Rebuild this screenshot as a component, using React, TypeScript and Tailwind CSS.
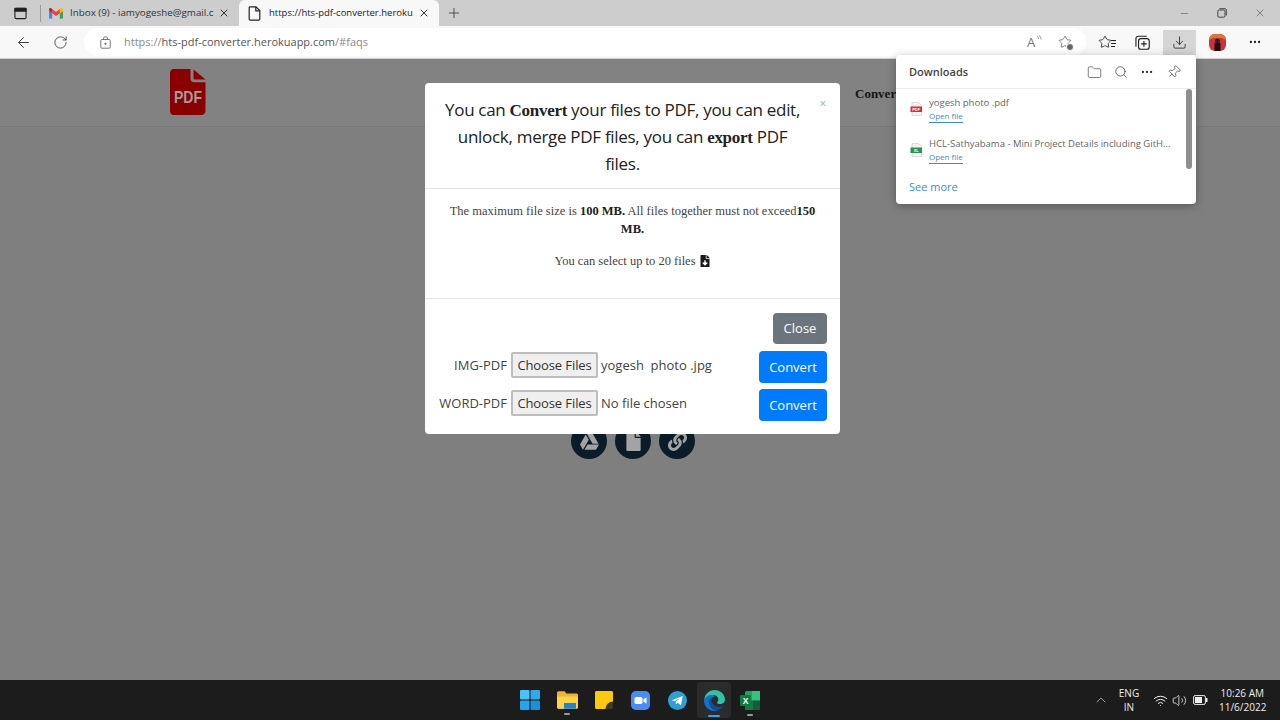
import React from "react";
import { ArrowLeft, RotateCw, X, Plus, Minus, Search, MoreHorizontal, Pin, Folder, Download, Star, ChevronUp, Wifi, Volume2 } from "lucide-react";
import { FaGoogleDrive, FaFile, FaLink, FaFileDownload } from "react-icons/fa";

const Gmail = () => (
  <svg width="14" height="11" viewBox="0 0 24 18" fill="none">
    <path d="M1.6 18H5.5V8.5L0 4.4V16.4C0 17.3.7 18 1.6 18Z" fill="#4285F4" />
    <path d="M18.5 18H22.4C23.3 18 24 17.3 24 16.4V4.4L18.5 8.5Z" fill="#34A853" />
    <path d="M18.5 1.4V8.5L24 4.4V2.2C24 .2 21.7-1 20.1.2Z" fill="#FBBC04" />
    <path d="M5.5 8.5V1.4L12 6.3 18.5 1.4V8.5L12 13.4Z" fill="#EA4335" />
    <path d="M0 2.2V4.4L5.5 8.5V1.4L3.9.2C2.3-1 0 .2 0 2.2Z" fill="#C5221F" />
  </svg>
);

const PageTab = () => (
  <svg width="13" height="15" viewBox="0 0 13 15" fill="none" stroke="#222" strokeWidth="1.2">
    <path d="M2 .8H8L11.8 4.6V13C11.8 13.7 11.3 14.2 10.6 14.2H2.4C1.7 14.2 1.2 13.7 1.2 13V1.6C1.2 1.1 1.5.8 2 .8Z" />
    <path d="M7.8 1V4.8H11.6" />
  </svg>
);

const SidebarIcon = () => (
  <svg width="13" height="13" viewBox="0 0 14 14" fill="none" stroke="#222" strokeWidth="1.2">
    <rect x="1" y="1.5" width="12" height="11" rx="1.5" />
    <rect x="1" y="1.5" width="12" height="3" fill="#222" />
  </svg>
);

const PdfLogo = () => (
  <svg width="36" height="46" viewBox="0 0 36 46">
    <path d="M3.5 0H20.5V10C20.5 11.800 22 13.200 24 13.200H35.500V42C35.500 44.200 33.700 46 31.500 46H3.500C1.500 46 0 44.200 0 42V4C0 1.800 1.500 0 3.500 0Z" fill="#8a0000" />
    <path d="M23.500 0.500L35.500 10.500H25C24 10.500 23.500 10 23.500 9Z" fill="#8a0000" />
    <text x="18" y="34" textAnchor="middle" fontFamily="'Liberation Sans', sans-serif" fontWeight="700" fontSize="17" fill="#a89a9a" textLength="28" lengthAdjust="spacingAndGlyphs">PDF</text>
  </svg>
);

const SmallFile = ({ color, label }: { color: string; label: string }) => (
  <svg width="13" height="14" viewBox="0 0 13 14">
    <path d="M2 .5H8.500L11.500 3.500V13.500H2Z" fill="#f3f3f3" stroke="#c8c8c8" strokeWidth=".6" />
    <rect x="0.500" y="4.500" width="11.500" height="5.500" fill={color} />
    <text x="6.200" y="8.800" textAnchor="middle" fontSize="4" fontFamily="'Liberation Sans', sans-serif" fontWeight="700" fill="#fff">{label}</text>
  </svg>
);

const Win = () => (
  <svg width="20" height="20" viewBox="0 0 20 20">
    <rect x="0" y="0" width="9.500" height="9.500" rx="1" fill="#4cc2f4" />
    <rect x="10.500" y="0" width="9.500" height="9.500" rx="1" fill="#31a8e8" />
    <rect x="0" y="10.500" width="9.500" height="9.500" rx="1" fill="#2aa3e6" />
    <rect x="10.500" y="10.500" width="9.500" height="9.500" rx="1" fill="#1c8edb" />
  </svg>
);

const Explorer = () => (
  <svg width="21" height="18" viewBox="0 0 21 18">
    <path d="M0 2C0 1 .7.3 1.6.3H7.500L9.500 2.500H19.500C20.300 2.500 21 3.200 21 4V16C21 17 20.300 17.700 19.400 17.700H1.600C.7 17.700 0 17 0 16Z" fill="#f0b429" />
    <path d="M0 5.500H21V16C21 17 20.300 17.700 19.400 17.700H1.600C.7 17.700 0 17 0 16Z" fill="#fcd34d" />
    <rect x="7" y="12" width="12" height="5.700" fill="#1d84d8" />
  </svg>
);

const Sticky = () => (
  <svg width="18" height="18" viewBox="0 0 18 18">
    <path d="M1.500 0H16.500C17.300 0 18 .7 18 1.500V11L11 18H1.500C.7 18 0 17.300 0 16.500V1.500C0 .7.7 0 1.500 0Z" fill="#fdc90f" />
    <path d="M18 10.500V16.500C18 17.300 17.300 18 16.500 18H10.500C10.500 14 14 10.500 18 10.500Z" fill="#3c3a2c" />
  </svg>
);

const Zoom = () => (
  <svg width="19" height="19" viewBox="0 0 19 19">
    <rect width="19" height="19" rx="5" fill="#4a8cf6" />
    <rect x="3.500" y="6" width="8" height="7" rx="1.600" fill="#fff" />
    <path d="M12.300 8.600L15.500 6.300V12.700L12.300 10.400Z" fill="#fff" />
  </svg>
);

const Telegram = () => (
  <svg width="19" height="19" viewBox="0 0 19 19">
    <circle cx="9.500" cy="9.500" r="9.500" fill="#2f9fd8" />
    <path d="M3.800 9.300L14.600 5 13 14.200 9.600 11.700 8 13.300 7.700 10.800 12.400 6.900 6.500 10.300Z" fill="#fff" />
  </svg>
);

const Edge = () => (
  <svg width="21" height="21" viewBox="0 0 21 21">
    <path d="M10.500 0C16.300 0 21 4.300 21 9.800 21 12.600 18.600 14 16.200 14 13.800 14 12.800 13 13 12.200 13.900 11.500 14.300 10.600 14.300 9.500 14.300 7 12 5 8.800 5 5 5 2 8 .2 9.300 1 4 5.200 0 10.500 0Z" fill="#35c1a6" />
    <path d="M.2 9.300C2 6.500 5 5 8 5 11 5 12.300 6.500 9 7.200 6.400 7.800 5 10 5.200 12.600 5.500 16.500 9 20 12.800 20.800 11.900 20.900 11.200 21 10.500 21 4.700 21 0 16.300 0 10.500 0 10.100.1 9.700.2 9.300Z" fill="#1473c9" />
    <path d="M5.200 12.600C5 10 6.400 7.800 9 7.200 8 8.500 7.600 10 8 12 8.800 15.500 13 17.500 16.500 16.700 17.500 16.400 18.500 16 19.300 15.500 17.600 18.500 15.300 20.400 12.800 20.800 9 20 5.500 16.500 5.200 12.600Z" fill="#0f4c9c" />
  </svg>
);

const Excel = () => (
  <svg width="20" height="19" viewBox="0 0 20 19">
    <rect x="5" y="0" width="15" height="19" rx="1.500" fill="#21a366" />
    <rect x="12" y="0" width="8" height="9.500" fill="#33c481" />
    <rect x="5" y="9.500" width="7.500" height="9.500" fill="#107c41" />
    <rect x="12.500" y="9.500" width="7.500" height="9.500" fill="#185c37" />
    <rect x="0" y="4" width="11" height="11" rx="1" fill="#107c41" />
    <text x="5.500" y="12.500" textAnchor="middle" fontSize="8.500" fontWeight="700" fontFamily="'Liberation Sans', sans-serif" fill="#fff">X</text>
  </svg>
);

const Collections = () => (
  <svg width="15" height="15" viewBox="0 0 16 16" fill="none" stroke="#222" strokeWidth="1.200">
    <rect x="3.800" y="3.800" width="11.400" height="11.400" rx="2.500" />
    <path d="M12.500 1.300H3.500C2 1.300 1 2.300 1 3.800V12.500" />
    <path d="M9.500 6.500V12.500M6.500 9.500H12.500" />
  </svg>
);

const ReadAloud = () => (
  <span className="relative flex h-[14px] w-[15px] items-end">
    <span className="text-[13px] leading-[14px] text-[#777]">A</span>
    <svg className="absolute right-0 top-0" width="6" height="7" viewBox="0 0 6 7" fill="none" stroke="#777" strokeWidth=".8">
      <path d="M.8 1.200C2.200 2 2.600 3 2.600 4.200" />
      <path d="M2.800 .3C4.500 1.500 5 2.800 5 4.500" />
    </svg>
  </span>
);

const FavAdd = () => (
  <span className="relative flex">
    <Star size={14} strokeWidth={1.2} color="#555" />
    <span className="absolute -bottom-[2px] -right-[2px] h-[8px] w-[8px] rounded-full border border-white bg-[#666]" />
  </span>
);

const FavList = () => (
  <span className="relative flex h-4 w-[18px] items-center">
    <Star size={14} strokeWidth={1.4} color="#222" />
    <span className="absolute right-0 top-[6px] flex flex-col gap-[2px]">
      <span className="h-px w-[5px] bg-[#222]" />
      <span className="h-px w-[5px] bg-[#222]" />
      <span className="h-px w-[4px] bg-[#222]" />
    </span>
  </span>
);

const Avatar = () => (
  <svg width="17" height="17" viewBox="0 0 17 17">
    <rect width="17" height="17" rx="6" fill="#c8343a" />
    <path d="M0 6C0 2.500 2.500 0 6 0H11C14.500 0 17 2.500 17 6L13 4H4Z" fill="#d9773a" />
    <circle cx="8.500" cy="7" r="2.500" fill="#3a1b1e" />
    <rect x="5.500" y="9" width="6" height="8" fill="#1c1014" />
  </svg>
);

const Battery = () => (
  <svg width="15" height="10" viewBox="0 0 15 10" fill="none">
    <rect x=".6" y=".6" width="11.800" height="8.800" rx="1.500" stroke="#eee" strokeWidth="1" />
    <rect x="2" y="2" width="7" height="6" fill="#eee" />
    <rect x="13" y="3" width="1.500" height="4" fill="#eee" />
  </svg>
);

const ChooseBtn = () => (
  <span className="flex h-[26px] w-[87px] shrink-0 items-center justify-center rounded-[2px] border-2 border-[#bdbdbd] bg-[#efefef] pt-[1px] text-[13px] tracking-[-0.1px] text-[#333]">Choose Files</span>
);

const Convert = () => (
  <span className="flex h-[32px] w-[68px] shrink-0 items-center justify-center rounded-[4px] bg-[#007bff] pt-[1px] text-[13px] text-white">Convert</span>
);

const CircleBtn = ({ children }: { children: React.ReactNode }) => (
  <span className="flex h-9 w-9 items-center justify-center rounded-full bg-[#0b1b29] text-[19px] text-[#a3a3a3]">{children}</span>
);

export default function App() {
  return (
    <div className="relative flex h-[720px] w-[1280px] flex-col overflow-hidden bg-[#7f7f7f] font-['Open_Sans','Noto_Sans',sans-serif]">
      {/* Tab strip */}
      <div className="flex h-[26px] shrink-0 items-end bg-[#cdcdcd]">
        <div className="flex h-[26px] w-[40px] items-center pl-[14px]"><SidebarIcon /></div>
        <div className="h-[17px] w-px self-center bg-[#9a9a9a]" />
        <div className="flex h-[26px] w-[198px] items-center pl-[8px] pr-[9px]">
          <Gmail />
          <span className="ml-[7px] w-[145px] overflow-hidden whitespace-nowrap text-[9.8px] text-[#333]">Inbox (9) - iamyogeshe@gmail.c</span>
          <X size={12} color="#333" className="ml-auto" />
        </div>
        <div className="flex h-[26px] w-[200px] items-center rounded-t-[6px] bg-[#f8f8f8] pl-[9px] pr-[9px]">
          <PageTab />
          <span className="ml-[8px] w-[145px] overflow-hidden whitespace-nowrap text-[9.5px] text-[#222]">https://hts-pdf-converter.heroku</span>
          <X size={12} color="#333" className="ml-auto" />
        </div>
        <div className="flex h-[26px] w-[30px] items-center justify-start pl-[7px]"><Plus size={16} strokeWidth={1.2} color="#333" /></div>
        <div className="ml-auto flex h-[26px] items-center gap-[27px] pr-[14px]">
          <Minus size={11} strokeWidth={1.3} color="#555" />
          <svg width="10" height="10" viewBox="0 0 10 10" fill="none" stroke="#444" strokeWidth="1">
            <rect x=".8" y="2" width="7.200" height="7.200" rx="1.300" />
            <path d="M2.500 .7H8C8.800 .7 9.300 1.200 9.300 2V7.500" />
          </svg>
          <X size={12} strokeWidth={1.2} color="#444" />
        </div>
      </div>

      {/* Toolbar */}
      <div className="flex h-[33px] shrink-0 items-center border-b border-[#d0d0d0] bg-[#f8f8f8]">
        <div className="flex w-[84px] items-center pl-[15px]">
          <ArrowLeft size={17} strokeWidth={1.3} color="#333" />
          <RotateCw size={15} strokeWidth={1.3} color="#333" className="ml-[21px]" />
        </div>
        <div className="flex h-[28px] w-[1002px] items-center rounded-full bg-white pl-[16px]">
          <svg width="11" height="13" viewBox="0 0 11 13" fill="none" stroke="#666" strokeWidth=".9">
            <rect x=".8" y="3.500" width="9.400" height="8.700" rx="1" />
            <path d="M3.500 3.500V2.300C3.500 1.400 4.300.8 5.500.8 6.700.8 7.500 1.400 7.500 2.300V3.500" />
            <circle cx="5.500" cy="7.800" r=".7" fill="#666" />
          </svg>
          <span className="ml-[13px] text-[11px] text-[#8a8a8a]">https://<span className="text-[#555]">hts-pdf-converter.herokuapp.com</span>/#faqs</span>
          <div className="ml-auto flex items-center gap-[16px] pr-[14px]">
            <ReadAloud />
            <FavAdd />
          </div>
        </div>
        <div className="ml-[12px] flex items-center"><FavList /></div>
        <div className="ml-[19px] flex items-center"><Collections /></div>
        <div className="ml-[13px] flex h-[25px] w-[33px] items-center justify-center bg-[#d5d5d5]"><Download size={15} strokeWidth={1.3} color="#222" /></div>
        <div className="ml-[13px] flex items-center"><Avatar /></div>
        <div className="ml-[22px] flex items-center"><MoreHorizontal size={14} color="#222" /></div>
      </div>

      {/* Page */}
      <div className="relative flex-1 bg-[#7f7f7f]">
        <div className="flex h-[68px] items-start border-b border-[#797979] bg-[#828282] pl-[170px] pt-[10px]">
          <PdfLogo />
          <span className="ml-[649px] mt-[15px] font-['Liberation_Serif',serif] text-[13px] font-bold text-[#151515]">Converter</span>
        </div>
        <div className="flex justify-center pt-[296px]">
          <div className="ml-[-14px] flex gap-2">
            <CircleBtn><FaGoogleDrive /></CircleBtn>
            <CircleBtn><FaFile /></CircleBtn>
            <CircleBtn><FaLink /></CircleBtn>
          </div>
        </div>

        {/* Modal */}
        <div className="absolute left-[425px] top-[24px] w-[415px] rounded-[4px] bg-white">
          <div className="relative h-[106px] border-b border-[#e4e4e4] pl-[14px] pr-[34px] pt-[14px] text-center text-[17px] leading-[26px] tracking-[-0.3px] text-[#222]">
            You can <b className="font-['Liberation_Serif',serif] font-bold">Convert</b> your files to PDF, you can edit, unlock, merge PDF files, you can <b className="font-['Liberation_Serif',serif] font-bold">export</b> PDF files.
            <span className="absolute right-[14px] top-[8px] text-[12px] text-[#aaa]">×</span>
          </div>
          <div className="h-[110px] border-b border-[#e4e4e4] px-[20px] pt-[13px] text-center font-['Liberation_Serif',serif] text-[12.5px] leading-[18px] text-[#444]">
            <p>The maximum file size is <b className="text-[#222]">100 MB.</b> All files together must not exceed<b className="text-[#222]">150 MB.</b></p>
            <p className="mt-[14px] flex items-center justify-center gap-[3px]">You can select up to 20 files <FaFileDownload className="text-[12px] text-[#1a1a1a]" /></p>
          </div>
          <div className="flex flex-col items-end px-[13px] pb-[13px] pt-[14px] text-[13px] text-[#444]">
            <span className="flex h-[31px] w-[54px] items-center justify-center rounded-[4px] bg-[#6c757d] text-white">Close</span>
            <div className="mt-[7px] flex w-full items-center">
              <span className="-mt-[3px] w-[69px] whitespace-nowrap text-right">IMG-PDF</span>
              <span className="ml-[4px] -mt-[4px]"><ChooseBtn /></span>
              <span className="ml-[3px] -mt-[3px] whitespace-pre">yogesh  photo .jpg</span>
              <span className="ml-auto"><Convert /></span>
            </div>
            <div className="mt-[6px] flex w-full items-center">
              <span className="-mt-[3px] w-[69px] whitespace-nowrap text-right">WORD-PDF</span>
              <span className="ml-[4px] -mt-[4px]"><ChooseBtn /></span>
              <span className="ml-[3px] -mt-[2px] whitespace-pre">No file chosen</span>
              <span className="ml-auto"><Convert /></span>
            </div>
          </div>
        </div>
      </div>

      {/* Taskbar */}
      <div className="flex h-[40px] shrink-0 items-center bg-[#1c1c1c] pl-[520px] text-[#ececec]">
        <div className="flex items-center">
          <Win />
          <span className="relative ml-[17px] flex"><Explorer /><span className="absolute -bottom-[6px] left-[7px] h-[2px] w-[6px] rounded bg-[#9a9a9a]" /></span>
          <span className="ml-[17px]"><Sticky /></span>
          <span className="ml-[18px]"><Zoom /></span>
          <span className="ml-[18px]"><Telegram /></span>
          <span className="relative ml-[10px] flex h-[36px] w-[34px] items-center justify-center rounded bg-[#2b2b2b]"><Edge /><span className="absolute bottom-[1px] left-[11px] h-[2px] w-[12px] rounded bg-[#3ba0e8]" /></span>
          <span className="relative ml-[9px] flex"><Excel /><span className="absolute -bottom-[6px] left-[7px] h-[2px] w-[6px] rounded bg-[#9a9a9a]" /></span>
        </div>
        <div className="ml-auto flex items-center pr-[16px]">
          <ChevronUp size={16} strokeWidth={1.2} color="#bbb" />
          <span className="ml-[9px] w-[22px] text-center text-[10px] leading-[14px]">ENG<br />IN</span>
          <Wifi size={15} strokeWidth={1.6} color="#eee" className="ml-[13px]" />
          <Volume2 size={15} strokeWidth={1.3} color="#eee" className="ml-[4px]" />
          <span className="ml-[6px]"><Battery /></span>
          <span className="ml-[11px] w-[45px] text-right text-[10px] leading-[14px]">10:26 AM<br />11/6/2022</span>
        </div>
      </div>

      {/* Downloads flyout */}
      <div className="absolute left-[896px] top-[55px] h-[149px] w-[300px] overflow-hidden rounded-[4px] bg-white shadow-[0_2px_10px_rgba(0,0,0,0.3)]">
        <div className="flex h-[34px] items-center border-b border-[#ededed] pl-[13px] pr-[15px] pt-[1px]">
          <span className="text-[11px] font-semibold text-[#444]">Downloads</span>
          <div className="ml-auto flex items-center gap-[12px]">
            <Folder size={15} strokeWidth={1} color="#333" />
            <Search size={14} strokeWidth={1.2} color="#333" />
            <MoreHorizontal size={14} color="#333" className="mr-px" />
            <Pin size={14} strokeWidth={1.1} color="#333" className="rotate-45" />
          </div>
        </div>
        <div className="relative pl-[14px] pt-[7px]">
          <div className="flex h-[33px]">
            <span className="mt-[6px]"><SmallFile color="#e02b2b" label="PDF" /></span>
            <span className="ml-[6px] flex flex-col text-[9.5px] leading-[13px] text-[#666]">
              yogesh photo .pdf
              <span className="w-[34px] whitespace-nowrap border-b border-[#3c8dc9] text-[8px] leading-[13px] text-[#3c8dc9]">Open file</span>
            </span>
          </div>
          <div className="mt-[8px] flex h-[33px]">
            <span className="mt-[6px]"><SmallFile color="#2f8f4f" label="XL" /></span>
            <span className="ml-[6px] flex flex-col whitespace-nowrap text-[9.5px] leading-[13px] text-[#666]">
              HCL-Sathyabama - Mini Project Details including GitH...
              <span className="w-[34px] whitespace-nowrap border-b border-[#3c8dc9] text-[8px] leading-[13px] text-[#3c8dc9]">Open file</span>
            </span>
          </div>
          <div className="absolute right-[4px] top-0 h-[80px] w-[6px] rounded-full bg-[#8f8f8f]" />
          <div className="-ml-px mt-[9px] text-[11px] text-[#3c8dc9]">See more</div>
        </div>
      </div>
    </div>
  );
}
